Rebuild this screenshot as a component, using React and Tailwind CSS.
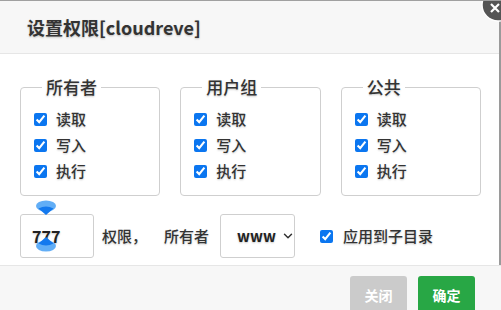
import { ChevronDown } from 'lucide-react'

const font = { fontFamily: '"Noto Sans CJK SC", "Liberation Sans", sans-serif' }

function Drop({ flip }) {
  return (
    <svg width="20" height="16" viewBox="0 0 20 16" className={flip ? 'rotate-180' : ''}>
      <ellipse cx="10" cy="6" rx="10" ry="5.5" fill="#62aef6" />
      <path d="M2.5 8.5 Q10 4.5 17.5 8.5 L10 15 Z" fill="#1479ee" />
    </svg>
  )
}

function Group({ title }) {
  return (
    <fieldset className="w-[142px] border border-[#cfcfcf] rounded-[4px] pl-[13px] pt-[9px] pb-[11px]">
      <legend className="ml-[8px] px-[4px] text-[17px] leading-[20px] text-[#333] font-medium">{title}</legend>
      {['读取', '写入', '执行'].map(l => (
        <label key={l} className="flex items-center h-[26px] gap-[9px] text-[15px] font-medium text-[#333]">
          <input type="checkbox" defaultChecked className="w-[13px] h-[13px] m-0 accent-[#0b76f0]" />
          {l}
        </label>
      ))}
    </fieldset>
  )
}

export default function App() {
  return (
    <div style={font} className="relative w-[501px] h-[310px] overflow-hidden bg-white border-t border-[#a0a0a0] [text-shadow:0_1px_2px_rgba(0,0,0,0.22)]">
      <div className="absolute top-[18px] right-0 bottom-0 w-[2px] bg-[#9a9a9a]" />
      <svg className="absolute -top-[13px] left-[481px]" width="34" height="34" viewBox="0 0 34 34">
        <circle cx="17" cy="17" r="16" fill="#555" stroke="#fff" strokeWidth="1.5" />
        <path d="M10 24 L18 16 M10 16 L18 24" stroke="#fff" strokeWidth="2.2" />
      </svg>

      <div className="h-[53px] bg-[#f7f7f7] border-b border-[#e6e6e6] flex items-center pl-[27px]">
        <h3 className="text-[18px] font-semibold text-[#333]">设置权限[cloudreve]</h3>
      </div>

      <div className="pt-[23px] px-[20px]">
        <div className="flex gap-[20px]">
          <Group title="所有者" />
          <Group title="用户组" />
          <Group title="公共" />
        </div>

        <div className="flex items-center mt-[18px] h-[44px] text-[15px] font-medium text-[#333]">
          <div className="relative w-[74px] h-[44px] border border-[#cfcfcf] rounded-[3px] flex items-center pl-[11px] text-[16px] font-semibold text-[#222]">
            777
            <div className="absolute left-[15px] -top-[15px]"><Drop /></div>
            <div className="absolute left-[15px] top-[21px]"><Drop flip /></div>
          </div>
          <span className="ml-[8px]">权限，</span>
          <span className="ml-[17px]">所有者</span>
          <div className="ml-[11px] w-[75px] h-[44px] border border-[#cfcfcf] rounded-[3px] flex items-center pl-[16px] gap-[5px] text-[15px] text-[#222] overflow-hidden">
            <span className="font-semibold">www</span>
            <ChevronDown size={14} strokeWidth={2.5} className="shrink-0 text-[#333]" />
          </div>
          <label className="ml-[25px] flex items-center gap-[10px]">
            <input type="checkbox" defaultChecked className="w-[13px] h-[13px] m-0 accent-[#0b76f0]" />
            应用到子目录
          </label>
        </div>
      </div>

      <div className="absolute left-0 right-0 bottom-0 top-[264px] bg-[#f7f7f7] border-t border-[#e6e6e6] flex justify-end gap-[11px] pr-[26px] pt-[10px]">
        <button className="w-[57px] h-[38px] rounded-[3px] bg-[#cbcbcb] text-white text-[14px] font-bold">关闭</button>
        <button className="w-[57px] h-[38px] rounded-[3px] bg-[#28a745] text-white text-[14px] font-bold">确定</button>
      </div>
    </div>
  )
}
